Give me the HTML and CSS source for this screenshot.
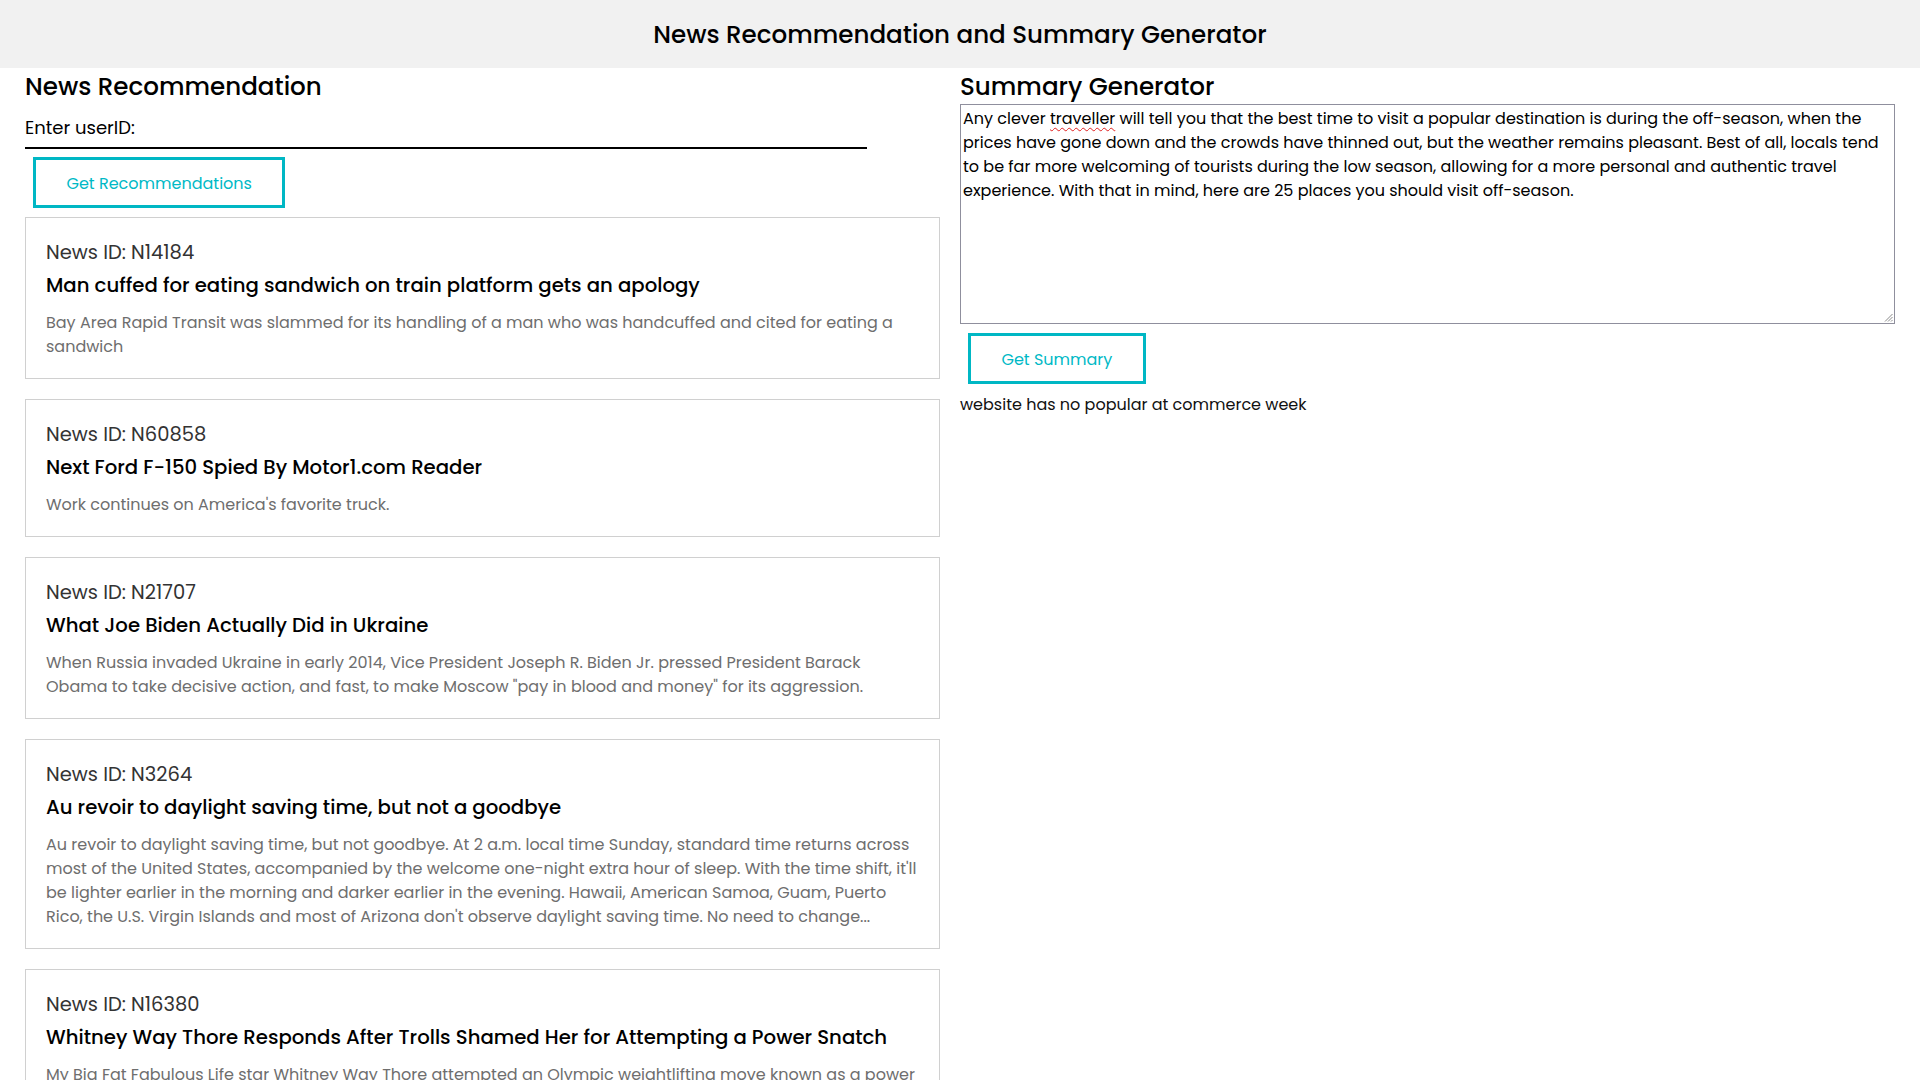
FILE: index.html
```html
<!DOCTYPE html>
<html lang="en">
<head>
<meta charset="utf-8">
<title>News Recommendation and Summary Generator</title>
<link rel="stylesheet" href="styles.css">
</head>
<body>
<header class="topbar">
  <h1 class="topbar-title">News Recommendation and Summary Generator</h1>
</header>
<main class="layout">
  <section class="panel">
    <h2 class="panel-title">News Recommendation</h2>
    <input class="user-input" type="text" placeholder="Enter userID:">
    <button class="btn btn-recommend" type="button">Get Recommendations</button>
    <div class="news-list">
      <article class="news-card">
        <p class="news-id">News ID: N14184</p>
        <h3 class="news-title">Man cuffed for eating sandwich on train platform gets an apology</h3>
        <p class="news-desc">Bay Area Rapid Transit was slammed for its handling of a man who was handcuffed and cited for eating a sandwich</p>
      </article>
      <article class="news-card">
        <p class="news-id">News ID: N60858</p>
        <h3 class="news-title">Next Ford F-150 Spied By Motor1.com Reader</h3>
        <p class="news-desc">Work continues on America's favorite truck.</p>
      </article>
      <article class="news-card">
        <p class="news-id">News ID: N21707</p>
        <h3 class="news-title">What Joe Biden Actually Did in Ukraine</h3>
        <p class="news-desc">When Russia invaded Ukraine in early 2014, Vice President Joseph R. Biden Jr. pressed President Barack Obama to take decisive action, and fast, to make Moscow "pay in blood and money" for its aggression.</p>
      </article>
      <article class="news-card">
        <p class="news-id">News ID: N3264</p>
        <h3 class="news-title">Au revoir to daylight saving time, but not a goodbye</h3>
        <p class="news-desc">Au revoir to daylight saving time, but not goodbye. At 2 a.m. local time Sunday, standard time returns across most of the United States, accompanied by the welcome one-night extra hour of sleep. With the time shift, it'll be lighter earlier in the morning and darker earlier in the evening. Hawaii, American Samoa, Guam, Puerto Rico, the U.S. Virgin Islands and most of Arizona don't observe daylight saving time. No need to change...</p>
      </article>
      <article class="news-card">
        <p class="news-id">News ID: N16380</p>
        <h3 class="news-title">Whitney Way Thore Responds After Trolls Shamed Her for Attempting a Power Snatch</h3>
        <p class="news-desc">My Big Fat Fabulous Life star Whitney Way Thore attempted an Olympic weightlifting move known as a power snatch, and some trolls had plenty to say about it.</p>
      </article>
    </div>
  </section>
  <section class="panel">
    <h2 class="panel-title">Summary Generator</h2>
    <div class="text-box" role="textbox" aria-multiline="true">Any clever <span class="spell">traveller</span> will tell you that the best time to visit a popular destination is during the off-season, when the prices have gone down and the crowds have thinned out, but the weather remains pleasant. Best of all, locals tend to be far more welcoming of tourists during the low season, allowing for a more personal and authentic travel experience. With that in mind, here are 25 places you should visit off-season.<svg class="grip" width="9" height="9" viewBox="0 0 9 9" aria-hidden="true"><path d="M8.5 1 L1 8.5 M8.5 4 L4 8.5 M8.5 7 L7 8.5" stroke="#8a8a8a" stroke-width="1" fill="none"/></svg></div>
    <button class="btn btn-summary" type="button">Get Summary</button>
    <p class="summary-output">website has no popular at commerce week</p>
  </section>
</main>
</body>
</html>
```
FILE: styles.css
```css
html {
  scrollbar-width: none;
}
html::-webkit-scrollbar {
  display: none;
}
body {
  margin: 0;
  font-family: Poppins, "Open Sans", sans-serif;
  color: #000;
  background: #fff;
}

.topbar {
  box-sizing: border-box;
  height: 68px;
  padding-top: 2px;
  background: #f1f1f1;
  display: flex;
  align-items: center;
  justify-content: center;
}
.topbar-title {
  margin: 0;
  font-size: 24.6px;
  font-weight: 500;
  line-height: 1.5;
  color: #000;
}

.layout {
  display: grid;
  grid-template-columns: 915fr 935fr;
  column-gap: 20px;
  padding: 0 25px;
  align-items: start;
}
.panel {
  display: flex;
  flex-direction: column;
  align-items: flex-start;
  min-width: 0;
}
.panel-title {
  margin: 2px 0 0;
  font-size: 24.6px;
  font-weight: 500;
  line-height: 34px;
  color: #000;
}

.user-input {
  box-sizing: border-box;
  width: 842px;
  height: 45px;
  margin: 0;
  padding: 4px 0 0;
  border: none;
  border-bottom: 2px solid #000;
  background: transparent;
  font-family: inherit;
  font-size: 18px;
  color: #000;
  outline: none;
}
.user-input::placeholder {
  color: #000;
  opacity: 1;
}

.btn {
  box-sizing: border-box;
  height: 51px;
  padding: 12px 30.5px 9px;
  border: 3px solid #00b7c4;
  background: #fff;
  color: #00b9c6;
  font-family: inherit;
  font-size: 16px;
  line-height: 24px;
  cursor: pointer;
}
.btn-recommend {
  margin: 8px 0 9px 8px;
}
.btn-summary {
  margin: 9px 0 0 8px;
}

.news-list {
  align-self: stretch;
  display: flex;
  flex-direction: column;
  gap: 20px;
}
.news-card {
  border: 1px solid #d0d0d0;
  padding: 21px 20px 19px;
}
.news-id {
  margin: 0;
  font-size: 19.5px;
  line-height: 28px;
  color: #333;
}
.news-title {
  margin: 4px 0 0;
  font-size: 19.7px;
  font-weight: 500;
  line-height: 28px;
  color: #000;
}
.news-desc {
  margin: 12px 0 0;
  font-size: 16px;
  line-height: 24px;
  color: #6e6e6e;
}

.text-box {
  position: relative;
  box-sizing: border-box;
  align-self: stretch;
  height: 220px;
  margin-top: 0;
  padding: 2px;
  border: 1px solid #8f8f9d;
  font-size: 16px;
  line-height: 24px;
  color: #000;
  overflow: hidden;
}
.spell {
  text-decoration: underline wavy #e02020;
  text-decoration-thickness: 1px;
  text-underline-offset: 3px;
  text-decoration-skip-ink: none;
}
.grip {
  position: absolute;
  right: 1px;
  bottom: 1px;
}

.summary-output {
  margin: 9px 0 0;
  font-size: 16px;
  line-height: 24px;
  color: #111;
}
```
